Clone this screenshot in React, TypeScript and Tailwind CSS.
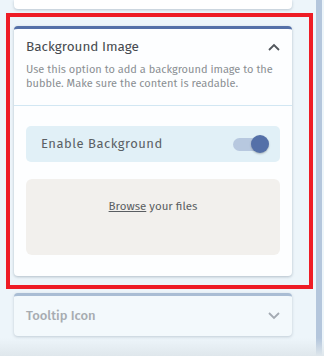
import React from "react";

export default function App() {
  const font = { fontFamily: '"Fira Sans", "Open Sans", "Noto Sans", sans-serif' };
  return (
    <div className="relative w-[324px] h-[356px] overflow-hidden bg-[#edf5fa] flex" style={font}>
      <div className="w-[316px] flex flex-col pl-[14px] pr-[24px]">
        {/* previous card bottom */}
        <div className="h-[9px] bg-white rounded-b-[4px] shadow-[0_1px_3px_rgba(90,110,130,0.35)]" />

        {/* Background Image card */}
        <div className="mt-[17px] h-[250px] bg-[#fdfeff] rounded-[4px] border-t-[3px] border-[#5470a8] shadow-[0_1px_3px_rgba(90,110,130,0.4)] flex flex-col">
          <div className="px-[12px] pt-[9px] pb-[15px] border-b border-[#d2e7f3]">
            <div className="flex items-center justify-between h-[18px]">
              <span className="text-[13.5px] text-[#474b50]">Background Image</span>
              <svg width="12" height="8" viewBox="0 0 12 8">
                <path d="M1 7 L6 2 L11 7" fill="none" stroke="#51565c" strokeWidth="1.8" />
              </svg>
            </div>
            <p className="mt-[7px] text-[11px] leading-[13.5px] text-[#8a8e92]">
              Use this option to add a background image to the bubble. Make sure the content is readable.
            </p>
          </div>
          <div className="px-[12px] pt-[20px]">
            <div className="h-[36px] rounded-[5px] bg-[#e1f0f7] flex items-center justify-between pl-[15px] pr-[11px]">
              <span className="text-[13px] tracking-[0.5px] text-[#5a5f64]">Enable Background</span>
              <div className="relative w-[36px] h-[18px] flex items-center">
                <div className="w-[30px] h-[13px] rounded-full bg-[#b7c8df]" />
                <div className="absolute right-0 top-0 w-[18px] h-[18px] rounded-full bg-[#5470a8] shadow-[0_1px_2px_rgba(0,0,0,0.25)]" />
              </div>
            </div>
            <div className="mt-[17px] h-[76px] rounded-[6px] bg-[#f2f0ed] flex items-center justify-center pb-[20px]">
              <span className="text-[11.5px] text-[#5a5e62]">
                <span className="underline">Browse</span> your files
              </span>
            </div>
          </div>
        </div>

        {/* Tooltip Icon card */}
        <div className="relative z-10 mt-[17px] h-[43px] bg-[#f3f9fc] rounded-[4px] border-t-[3px] border-[#a9bdd4] shadow-[0_1px_3px_rgba(90,110,130,0.3)] flex items-center justify-between px-[12px] pb-[1px]">
          <span className="text-[13px] font-medium text-[#a7acb1]">Tooltip Icon</span>
          <svg width="12" height="8" viewBox="0 0 12 8">
            <path d="M1 1 L6 6 L11 1" fill="none" stroke="#a3aab2" strokeWidth="1.8" />
          </svg>
        </div>
        <div className="flex-1" />
      </div>
      <div className="w-[6px] h-full bg-[#b4c6dc]" />
      <div className="flex-1" />

      <div className="absolute left-0 right-0 bottom-0 h-[18px] bg-gradient-to-b from-[#edf5fa00] to-[#dfe7ec] pointer-events-none" />

      {/* annotation */}
      <div className="absolute left-[6px] top-[13px] w-[307px] h-[276px] border-[4px] border-[#ee1c25] pointer-events-none" />
    </div>
  );
}
